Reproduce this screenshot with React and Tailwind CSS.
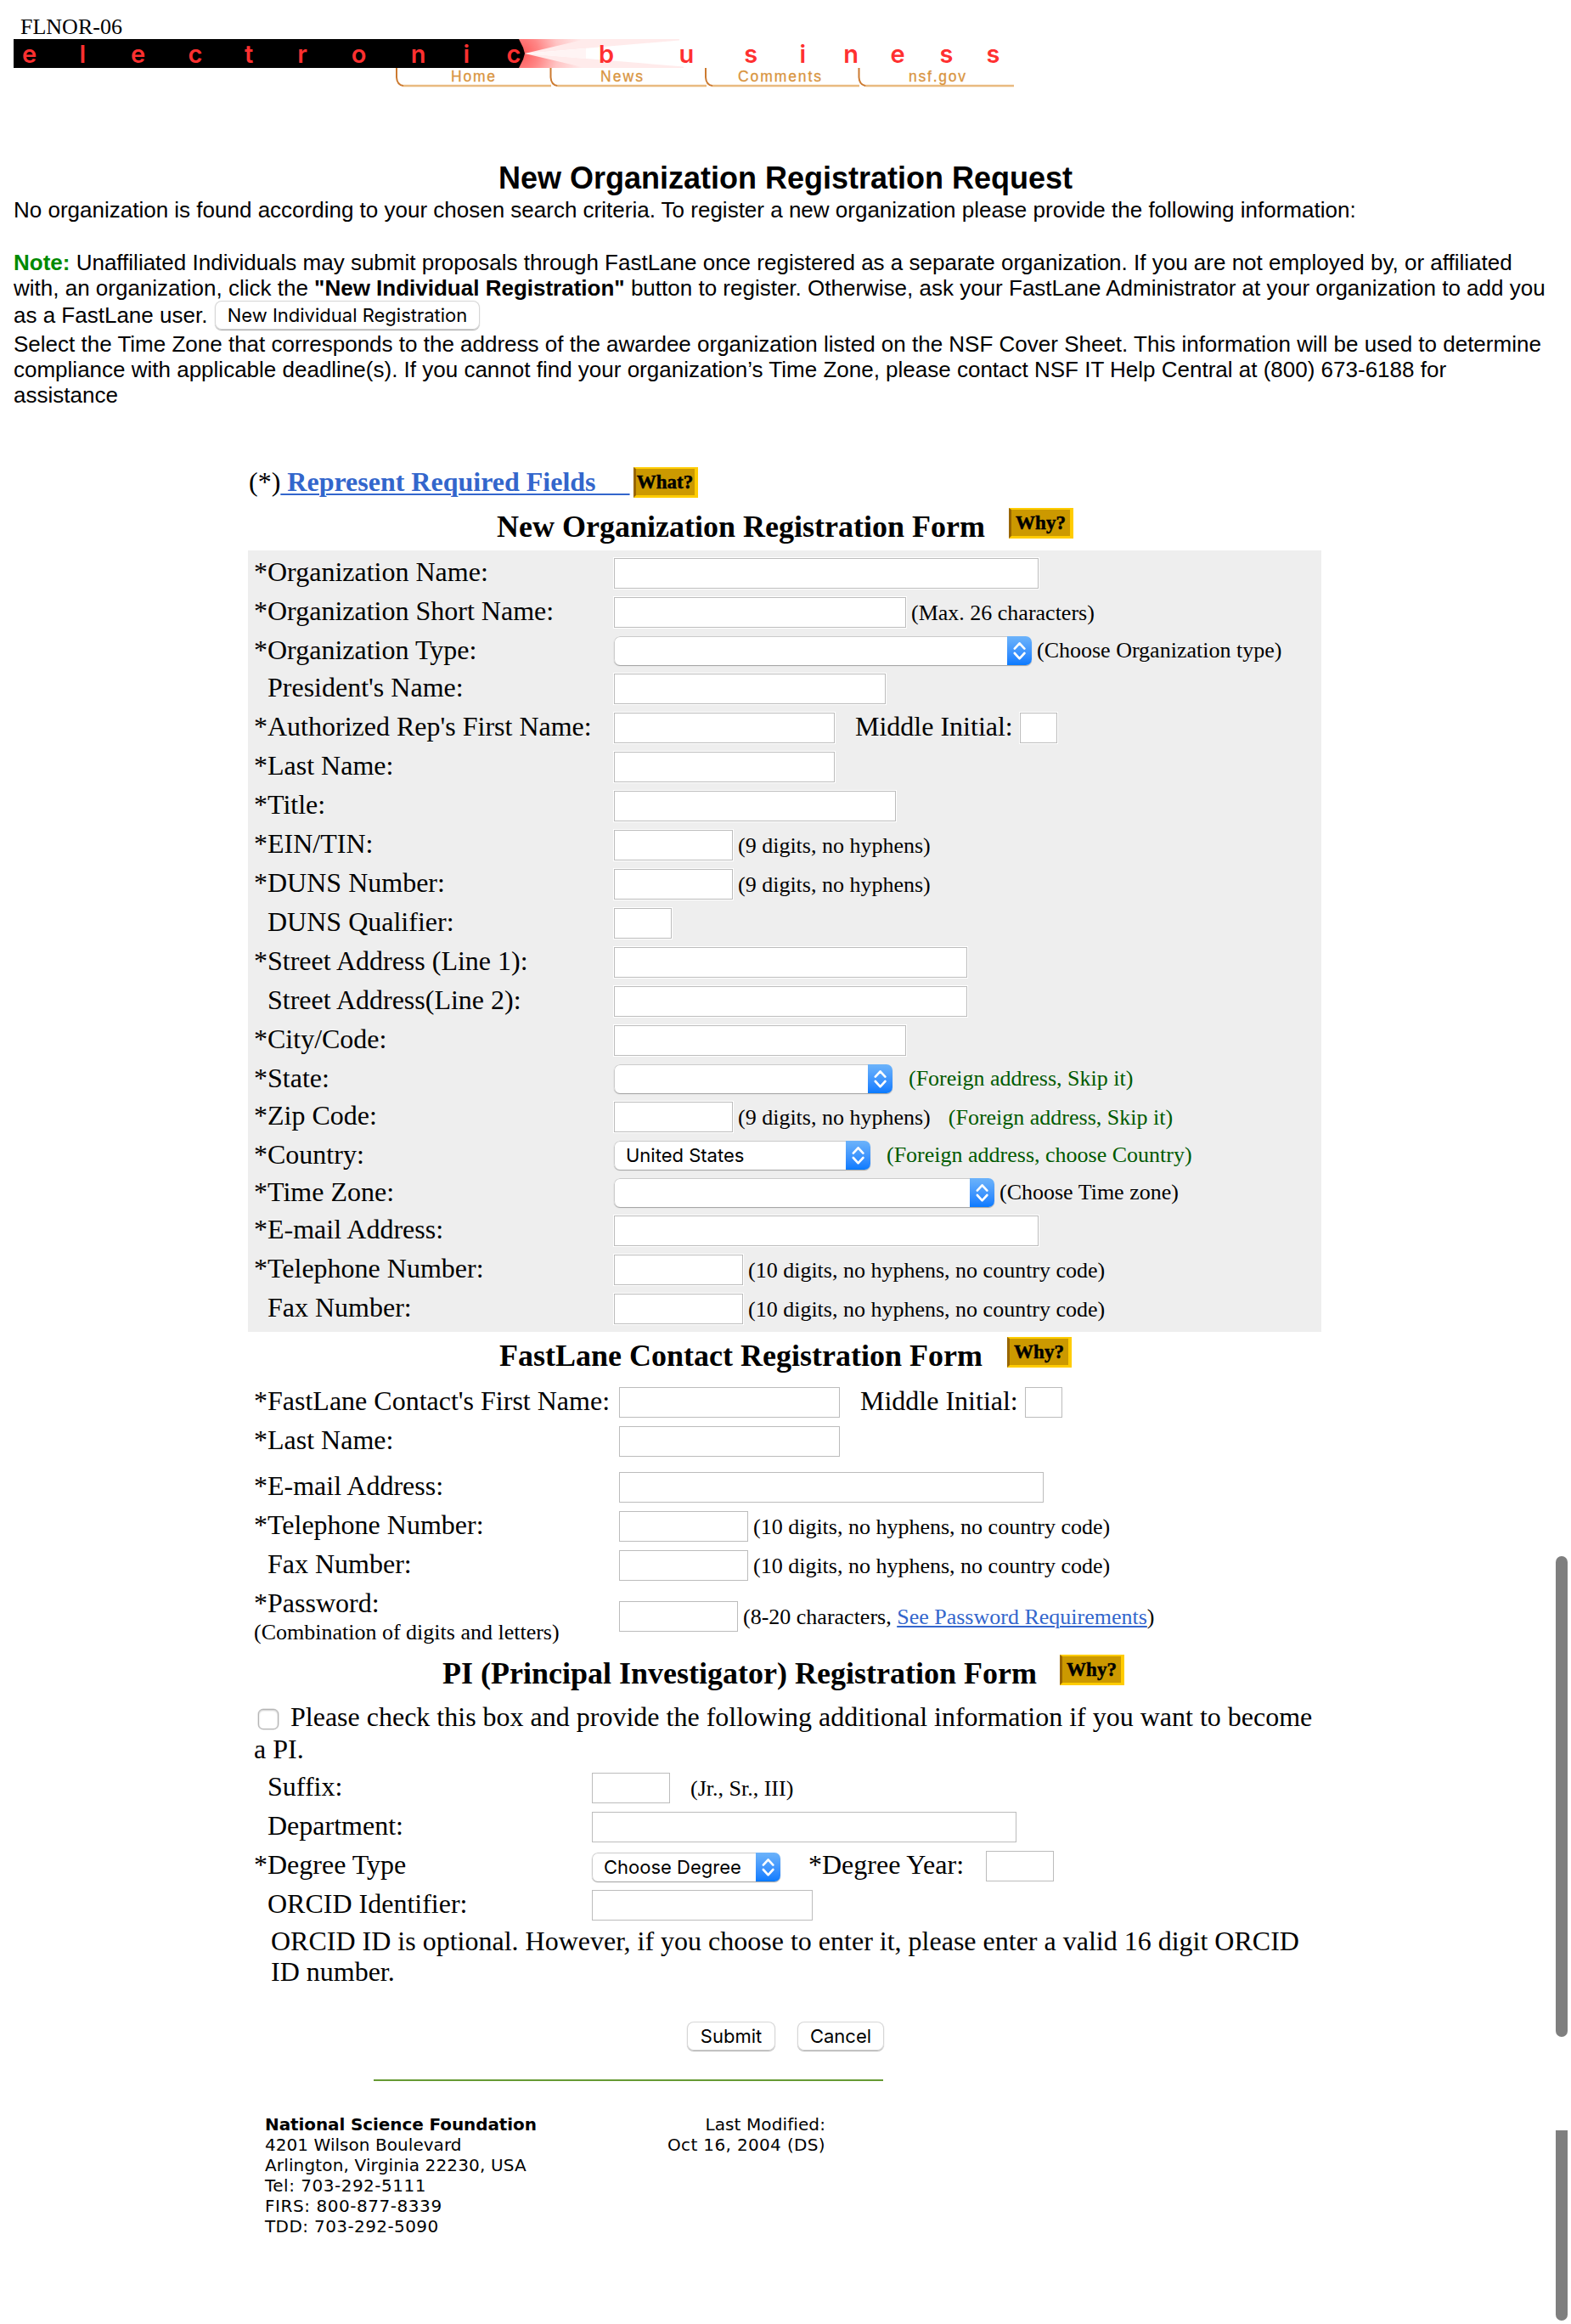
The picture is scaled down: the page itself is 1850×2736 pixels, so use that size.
import React from "react";

const SERIF = "font-['Liberation_Serif',serif]";

function Badge({ children, className = "" }) {
  return (
    <span
      className={`${SERIF} box-border block h-9 w-[76px] shrink-0 border-t-[2px] border-r-[4px] border-b-[3px] border-l-[3px] border-t-[#ffcc00] border-r-[#ffcc00] border-b-[#ffcc00] border-l-[#996600] bg-[#cc9900] text-center text-[23px] leading-[31px] font-bold text-black [-webkit-text-stroke:0.5px_black] ${className}`}
    >
      {children}
    </span>
  );
}

function Field({ w, className = "" }) {
  return (
    <input
      type="text"
      className={`block h-9 shrink-0 appearance-none rounded-none border border-[#bcbcbc] bg-white shadow-[0_0_0_1px_#fff] outline-none ${w} ${className}`}
    />
  );
}

function Select({ w, value = "", className = "" }) {
  return (
    <div
      className={`flex h-[34px] shrink-0 overflow-hidden rounded-[7px] bg-white shadow-[0_1px_1px_#9f9f9f] ${w} ${className}`}
    >
      <div className="flex-1 rounded-l-[7px] border-t border-l border-[#cbcbcb] pl-[13px] font-['Inter',sans-serif] text-[22px] leading-[33px] whitespace-nowrap">
        {value}
      </div>
      <div className="h-full w-[29px] bg-linear-to-b from-[#6cb3fa] to-[#067aff]">
        <svg width="29" height="34" viewBox="0 0 29 34" fill="none" stroke="#fff" strokeWidth="2.6" strokeLinecap="round" strokeLinejoin="round">
          <path d="M8.8 14.6 14.6 8.3 20.4 14.6M8.8 20 14.6 26.3 20.4 20" />
        </svg>
      </div>
    </div>
  );
}

function Button({ children, className = "" }) {
  return (
    <button
      type="button"
      className={`h-[34px] shrink-0 rounded-[8px] bg-white text-center font-['Inter',sans-serif] text-[22px] leading-[35px] whitespace-nowrap shadow-[0_1px_1px_#a8a8a8,inset_0_0_0_1px_#d6d6d6] ${className}`}
    >
      {children}
    </button>
  );
}

function Hint({ children, className = "mt-1 ml-1.5" }) {
  return (
    <span className={`shrink-0 text-[26px] leading-[29px] whitespace-nowrap ${className}`}>
      {children}
    </span>
  );
}

function Row({ label, required, labelW, h = "h-[46px]", children }) {
  return (
    <div className={`flex items-start ${h}`}>
      <div className={`mt-[3px] shrink-0 leading-9 whitespace-nowrap ${labelW} ${required ? "" : "pl-4"}`}>
        {required ? "*" : ""}
        {label}
      </div>
      <div className="mt-[5px] flex items-start">{children}</div>
    </div>
  );
}

const LETTERS = [
  ["e", 34.5], ["l", 97.3], ["e", 162.5], ["c", 230], ["t", 293], ["r", 356], ["o", 422.7],
  ["n", 492.7], ["i", 549.2], ["c", 605], ["b", 714], ["u", 808.4], ["s", 884.3], ["i", 945.2],
  ["n", 1002], ["e", 1057], ["s", 1114.4], ["s", 1169.4],
];

const NAV = [
  ["Home", 531, 52, 467, 648],
  ["News", 707, 50, 648.5, 831],
  ["Comments", 869, 98, 831, 1011],
  ["nsf.gov", 1070, 67, 1011.5, 1193],
];

function Banner() {
  return (
    <svg className="block overflow-visible" width="1200" height="60" viewBox="0 46 1200 60">
      <defs>
        <radialGradient id="glow" gradientUnits="userSpaceOnUse" cx="612" cy="63" r="75">
          <stop offset="0" stopColor="#ff5555" />
          <stop offset="0.3" stopColor="#ff8585" />
          <stop offset="0.6" stopColor="#ffc4c4" />
          <stop offset="1" stopColor="#ffebeb" />
        </radialGradient>
      </defs>
      <path d="M608 46H800V47.5L618 63 805 78.5V80H608Z" fill="#ffebeb" />
      <path d="M608 46H690L618 63 690 80H608Z" fill="url(#glow)" />
      <path d="M618 63 690 57V69Z" fill="#fff4f4" />
      <path d="M16 46H611L613 50 616 56 618 63 616 70 613 76 611 80H16Z" fill="#000" />
      <g fill="#ff3030" fontFamily="Inter, sans-serif" fontWeight="600" fontSize="29" textAnchor="middle">
        {LETTERS.map(([c, x]) => (
          <text key={x} x={x} y="73.5">{c}</text>
        ))}
      </g>
      {NAV.map(([t, x, len, a, b]) => (
        <g key={t}>
          <path d={`M${a + 8} 101H${b + 1}`} stroke="#e9ba80" strokeWidth="2.4" fill="none" />
          <path d={`M${a} 80V91Q${a + 0.5} 100 ${a + 8} 101`} stroke="#cc7a30" strokeWidth="2" fill="none" />
          <text x={x} y="96" textLength={len} fill="#d9953f" stroke="#d9953f" strokeWidth="0.3" fontFamily="'Liberation Sans', sans-serif" fontSize="17.5">
            {t}
          </text>
        </g>
      ))}
    </svg>
  );
}

const W1 = "w-[424px]";
const W2 = "w-[430px]";
const W3 = "w-[398px]";
const GREEN = "text-[#005a00]";

export default function App() {
  return (
    <div className={`${SERIF} relative h-[2736px] w-[1850px] overflow-hidden bg-white text-[32px] text-black`}>
      <div className="h-[46px] pt-[17px] pl-6 text-[26px] leading-[29px]">FLNOR-06</div>
      <Banner />

      <div className="mt-[83px] px-4 font-['Liberation_Sans',sans-serif] text-[26px] leading-[30px] whitespace-nowrap">
        <h1 className="text-center text-[36px] leading-[41px] font-bold">New Organization Registration Request</h1>
        <p className="mt-[2px]">
          No organization is found according to your chosen search criteria. To register a new organization please provide the following information:
        </p>
        <p className="mt-8">
          <b className="text-[#008a00]">Note:</b> Unaffiliated Individuals may submit proposals through FastLane once registered as a separate organization. If you are not employed by, or affiliated
        </p>
        <p>
          with, an organization, click the <b>"New Individual Registration"</b> button to register. Otherwise, ask your FastLane Administrator at your organization to add you
        </p>
        <div className="flex h-9 items-start">
          <span className="mt-[2px] w-[237px]">as a FastLane user.</span>
          <Button className="w-[312px]">New Individual Registration</Button>
        </div>
        <p>Select the Time Zone that corresponds to the address of the awardee organization listed on the NSF Cover Sheet. This information will be used to determine</p>
        <p>compliance with applicable deadline(s). If you cannot find your organization’s Time Zone, please contact NSF IT Help Central at (800) 673-6188 for</p>
        <p>assistance</p>
      </div>

      <div className="mt-[69px] ml-[292px] w-[1264px]">
        <div className="flex h-[43px] items-start pl-px leading-9">
          <span className="whitespace-pre">
            (*)
            <a className="font-bold text-[#3366cc] underline decoration-2 underline-offset-[3px]">{" Represent Required Fields\u00a0\u00a0\u00a0\u00a0\u00a0"}</a>
          </span>
          <Badge className="mt-px ml-1">What?</Badge>
        </div>

        <div className="flex h-14 items-start pl-[293px]">
          <h2 className="mt-2 w-[603px] text-[36px] leading-10 font-bold whitespace-nowrap">New Organization Registration Form</h2>
          <Badge className="mt-1.5">Why?</Badge>
        </div>

        <div className="bg-[#eeeeee] pt-1 pb-1 pl-[7px]">
          <Row labelW={W1} required label="Organization Name:"><Field w="w-[500px]" /></Row>
          <Row labelW={W1} required label="Organization Short Name:">
            <Field w="w-[344px]" />
            <Hint>(Max. 26 characters)</Hint>
          </Row>
          <Row labelW={W1} required label="Organization Type:" h="h-11">
            <Select w="w-[492px]" />
            <Hint className="mt-0.5 ml-1.5">(Choose Organization type)</Hint>
          </Row>
          <Row labelW={W1} label="President's Name:"><Field w="w-[320px]" /></Row>
          <Row labelW={W1} required label="Authorized Rep's First Name:">
            <Field w="w-[260px]" />
            <span className="-mt-0.5 ml-6 w-[194px] leading-9 whitespace-nowrap">Middle Initial:</span>
            <Field w="w-11" />
          </Row>
          <Row labelW={W1} required label="Last Name:"><Field w="w-[260px]" /></Row>
          <Row labelW={W1} required label="Title:"><Field w="w-[332px]" /></Row>
          <Row labelW={W1} required label="EIN/TIN:">
            <Field w="w-[140px]" />
            <Hint>(9 digits, no hyphens)</Hint>
          </Row>
          <Row labelW={W1} required label="DUNS Number:">
            <Field w="w-[140px]" />
            <Hint>(9 digits, no hyphens)</Hint>
          </Row>
          <Row labelW={W1} label="DUNS Qualifier:"><Field w="w-[68px]" /></Row>
          <Row labelW={W1} required label="Street Address (Line 1):"><Field w="w-[416px]" /></Row>
          <Row labelW={W1} label="Street Address(Line 2):"><Field w="w-[416px]" /></Row>
          <Row labelW={W1} required label="City/Code:"><Field w="w-[344px]" /></Row>
          <Row labelW={W1} required label="State:" h="h-11">
            <Select w="w-[328px]" />
            <Hint className={`mt-0.5 ml-[19px] ${GREEN}`}>(Foreign address, Skip it)</Hint>
          </Row>
          <Row labelW={W1} required label="Zip Code:">
            <Field w="w-[140px]" />
            <Hint>(9 digits, no hyphens)</Hint>
            <Hint className={`mt-1 ml-[21px] ${GREEN}`}>(Foreign address, Skip it)</Hint>
          </Row>
          <Row labelW={W1} required label="Country:" h="h-11">
            <Select w="w-[302px]" value="United States" />
            <Hint className={`mt-0.5 ml-[19px] ${GREEN}`}>(Foreign address, choose Country)</Hint>
          </Row>
          <Row labelW={W1} required label="Time Zone:" h="h-11">
            <Select w="w-[448px]" />
            <Hint className="mt-0.5 ml-1.5">(Choose Time zone)</Hint>
          </Row>
          <Row labelW={W1} required label="E-mail Address:"><Field w="w-[500px]" /></Row>
          <Row labelW={W1} required label="Telephone Number:">
            <Field w="w-[152px]" />
            <Hint>(10 digits, no hyphens, no country code)</Hint>
          </Row>
          <Row labelW={W1} label="Fax Number:">
            <Field w="w-[152px]" />
            <Hint>(10 digits, no hyphens, no country code)</Hint>
          </Row>
        </div>

        <div className="flex h-[60px] items-start pl-[296px]">
          <h2 className="mt-2 w-[598px] text-[36px] leading-10 font-bold whitespace-nowrap">FastLane Contact Registration Form</h2>
          <Badge className="mt-1.5">Why?</Badge>
        </div>

        <div className="pl-[7px]">
          <Row labelW={W2} required label="FastLane Contact's First Name:">
            <Field w="w-[260px]" />
            <span className="-mt-0.5 ml-6 w-[194px] leading-9 whitespace-nowrap">Middle Initial:</span>
            <Field w="w-11" />
          </Row>
          <Row labelW={W2} required label="Last Name:" h="h-[54px]"><Field w="w-[260px]" /></Row>
          <Row labelW={W2} required label="E-mail Address:"><Field w="w-[500px]" /></Row>
          <Row labelW={W2} required label="Telephone Number:">
            <Field w="w-[152px]" />
            <Hint>(10 digits, no hyphens, no country code)</Hint>
          </Row>
          <Row labelW={W2} label="Fax Number:">
            <Field w="w-[152px]" />
            <Hint>(10 digits, no hyphens, no country code)</Hint>
          </Row>
          <div className="flex h-[76px] items-start">
            <div className={`mt-[3px] shrink-0 leading-9 ${W2}`}>
              *Password:
              <div className="mt-0.5 text-[26px] leading-[29px]">(Combination of digits and letters)</div>
            </div>
            <Field w="w-[140px]" className="mt-[19px]" />
            <Hint className="mt-[23px] ml-1.5">
              (8-20 characters, <a className="text-[#3366cc] underline decoration-2 underline-offset-2">See Password Requirements</a>)
            </Hint>
          </div>
        </div>

        <div className="flex h-[60px] items-start pl-[229px]">
          <h2 className="mt-2 w-[727px] text-[36px] leading-10 font-bold whitespace-nowrap">PI (Principal Investigator) Registration Form</h2>
          <Badge className="mt-1.5">Why?</Badge>
        </div>

        <div className="pl-[7px]">
          <div className="h-20 leading-[38px] whitespace-nowrap">
            <div className="flex items-start">
              <input
                type="checkbox"
                className="mt-[10px] ml-[5px] block size-6 appearance-none rounded-[6px] border border-[#b4b4b4] bg-white shadow-[inset_0_1px_2px_#ccc,0_0_0_0.5px_#ccc]"
              />
              <span className="ml-[14px]">Please check this box and provide the following additional information if you want to become</span>
            </div>
            <div>a PI.</div>
          </div>
          <Row labelW={W3} label="Suffix:">
            <Field w="w-[92px]" />
            <Hint className="mt-1 ml-6">(Jr., Sr., III)</Hint>
          </Row>
          <Row labelW={W3} label="Department:"><Field w="w-[500px]" /></Row>
          <Row labelW={W3} required label="Degree Type">
            <Select w="w-[222px]" value="Choose Degree" className="mt-0.5" />
            <span className="-mt-0.5 ml-[33px] w-[209px] leading-9 whitespace-nowrap">*Degree Year:</span>
            <Field w="w-20" />
          </Row>
          <Row labelW={W3} label="ORCID Identifier:"><Field w="w-[260px]" /></Row>
          <p className="mt-px pl-5 leading-9 whitespace-nowrap">
            ORCID ID is optional. However, if you choose to enter it, please enter a valid 16 digit ORCID
            <br />
            ID number.
          </p>
        </div>
      </div>

      <div className="mt-[41px] ml-[809px] flex gap-[26px]">
        <Button className="w-[104px]">Submit</Button>
        <Button className="w-[102px]">Cancel</Button>
      </div>

      <div className="mt-[34px] ml-[440px] h-0.5 w-[600px] bg-[#669933]" />

      <footer className="mt-[39px] ml-[312px] flex w-[660px] justify-between font-['DejaVu_Sans',sans-serif] text-[20px] leading-6 whitespace-nowrap">
        <div>
          <div className="font-bold tracking-[-0.1px]">National Science Foundation</div>
          <div className="tracking-[0.05px]">4201 Wilson Boulevard</div>
          <div className="tracking-[0.15px]">Arlington, Virginia 22230, USA</div>
          <div className="tracking-[0.5px]">Tel: 703-292-5111</div>
          <div className="tracking-[0.55px]">FIRS: 800-877-8339</div>
          <div className="tracking-[0.4px]">TDD: 703-292-5090</div>
        </div>
        <div className="text-right">
          <div className="tracking-[0.1px]">Last Modified:</div>
          <div className="tracking-[0.35px]">Oct 16, 2004 (DS)</div>
        </div>
      </footer>

      <div className="absolute top-[1832px] right-1 h-[566px] w-[14px] rounded-full bg-[#7f7f7f]" />
      <div className="absolute top-[2508px] right-1 h-[224px] w-[14px] rounded-b-full bg-[#7f7f7f]" />
    </div>
  );
}
